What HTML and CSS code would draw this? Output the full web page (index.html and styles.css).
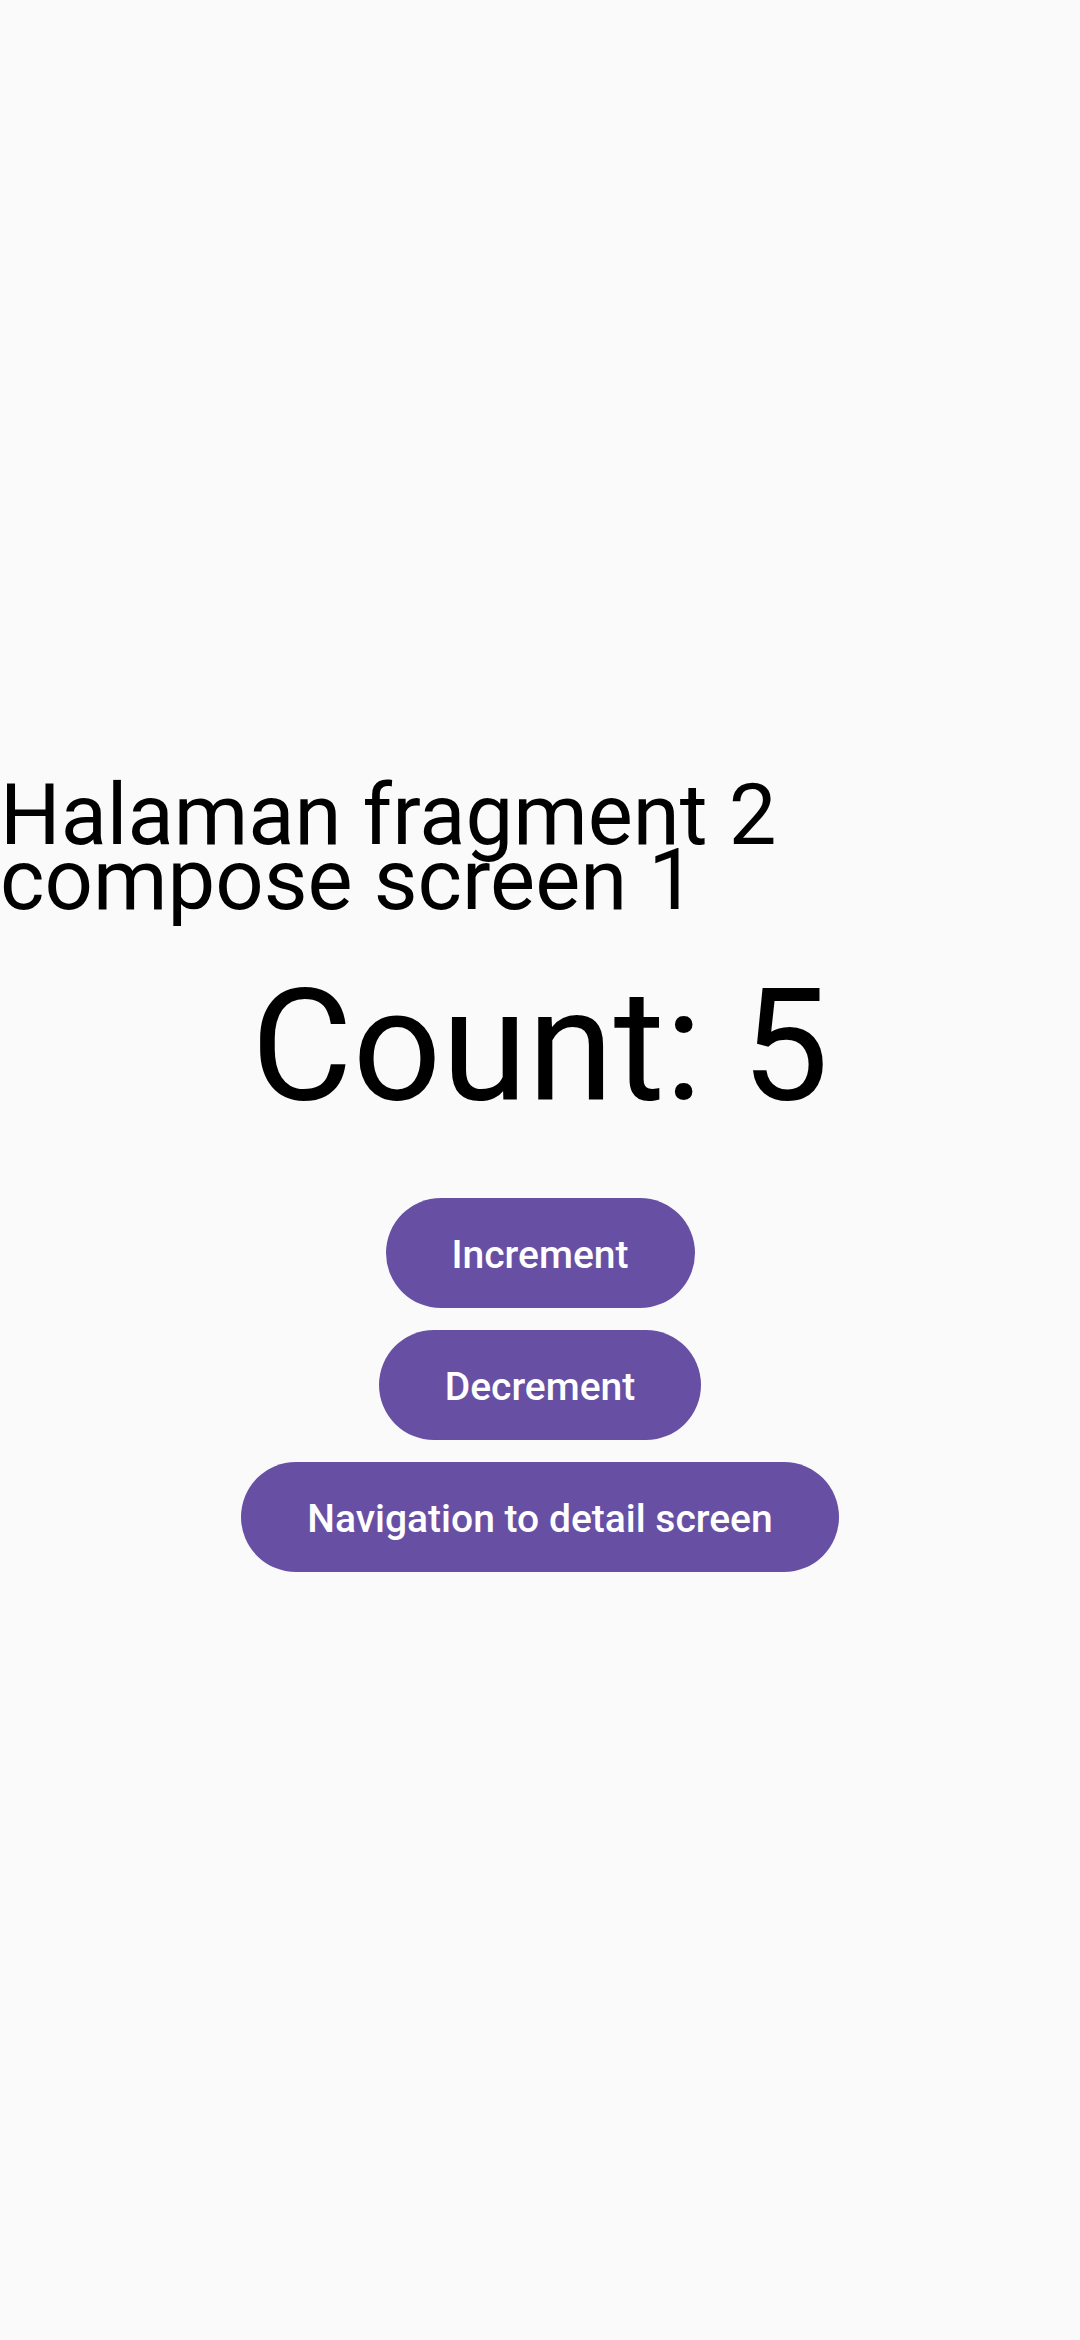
FILE: index.html
```html
<!DOCTYPE html>
<html>
<head>
<meta charset="utf-8">
<link rel="stylesheet" href="styles.css">
</head>
<body>
<div class="screen">
  <h1 class="title">Halaman fragment 2<br>compose screen 1</h1>
  <div class="count">Count: 5</div>
  <div class="actions">
    <button class="btn">Increment</button>
    <button class="btn">Decrement</button>
    <button class="btn">Navigation to detail screen</button>
  </div>
</div>
</body>
</html>
```
FILE: styles.css
```css
html, body {
  margin: 0;
  padding: 0;
  background: #fafafa;
}
.screen {
  width: 1080px;
  height: 2340px;
  overflow: hidden;
  padding-top: 783px;
  box-sizing: border-box;
  font-family: Roboto, "Noto Sans", sans-serif;
  color: #000;
}
.title {
  margin: 0;
  font-size: 85px;
  line-height: 65px;
  font-weight: 400;
}
.count {
  margin-top: 41px;
  font-size: 156px;
  line-height: 184px;
  text-align: center;
}
.actions {
  margin-top: 60px;
  display: flex;
  flex-direction: column;
  align-items: center;
  gap: 22px;
}
.btn {
  height: 110px;
  padding: 3px 66px 0;
  border: none;
  border-radius: 55px;
  background: #6750a4;
  color: #fff;
  font-family: Roboto, "Noto Sans", sans-serif;
  font-size: 39px;
  font-weight: 500;
}
```
